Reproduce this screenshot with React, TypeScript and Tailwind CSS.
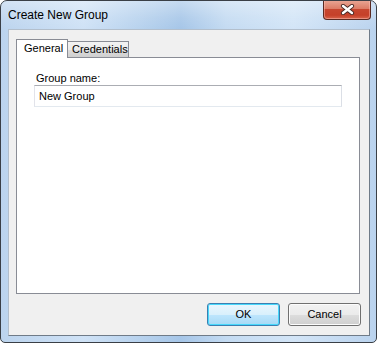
import React from "react";

export default function App() {
  const dlgFont = { fontFamily: '"Liberation Sans", Arial, sans-serif' };
  return (
    <div className="w-[377px] h-[343px] bg-white" style={dlgFont}>
      <div className="w-[377px] h-[343px] flex flex-col border border-[#3a3f46] rounded-t-[7px] rounded-b-[5px] overflow-hidden bg-[linear-gradient(90deg,#bcd4ee_0%,#cfe2f6_22%,#b3cfec_40%,#a6c6e8_48%,#c4dbf2_60%,#d3e5f7_78%,#bad3ee_100%)]">
        {/* title bar */}
        <div className="h-[28px] flex items-start shrink-0 bg-[linear-gradient(180deg,rgba(255,255,255,0.35)_0%,rgba(255,255,255,0.1)_60%,rgba(255,255,255,0)_100%)]">
          <div className="pl-[7px] pt-[6px] text-[12px] leading-[16px] text-black">
            Create New Group
          </div>
          <div className="ml-auto mr-[5px] -mt-px w-[48px] h-[20px] rounded-b-[4px] border border-[#5a2a22] border-t-0 flex items-center justify-center bg-[linear-gradient(180deg,#e9a897_0%,#dc7d67_45%,#c7462f_50%,#c54029_80%,#d8654c_100%)] shadow-[inset_0_0_0_1px_rgba(255,200,190,0.45)]">
            <svg width="15" height="11" viewBox="0 0 15 11">
              <path d="M3 2 L12 9 M12 2 L3 9" stroke="#4a2a26" strokeWidth="4.2" strokeLinecap="round" fill="none" />
              <path d="M3 2 L12 9 M12 2 L3 9" stroke="#ffffff" strokeWidth="2.4" strokeLinecap="round" fill="none" />
            </svg>
          </div>
        </div>
        {/* frame body */}
        <div className="flex-1 flex pl-[7px] pr-[6px] pb-[6px]">
          <div className="flex-1 flex flex-col bg-[#f0f0f0] border border-t-[#b3bfcc] border-l-[#b3bfcc] border-r-[#6f7b88] border-b-[#6f7b88]">
            <div className="pt-[9px] pl-[7px] pr-[9px] flex flex-col">
              {/* tabs */}
              <div className="h-[18px] flex items-end">
                <div className="relative z-10 h-[19px] -mb-px w-[52px] bg-white border border-b-0 border-[#898c95] pl-[7px] text-[11px] leading-[14px] pt-[1px] text-black">
                  General
                </div>
                <div className="h-[16px] w-[61px] border border-l-0 border-b-0 border-[#898c95] bg-[linear-gradient(180deg,#f3f3f3_0%,#ebebeb_50%,#dddddd_51%,#cfcfcf_100%)] pl-[4px] text-[11px] leading-[14px] text-black">
                  Credentials
                </div>
              </div>
              {/* panel */}
              <div className="h-[237px] bg-white border border-[#898c95] flex flex-col pl-[17px] pt-[14px]">
                <div className="pl-[2px] text-[11px] leading-[13px] text-black">Group name:</div>
                <div className="w-[308px] h-[22px] border border-[#abadb3] border-l-[#e2e3ea] border-r-[#dbdfe6] border-b-[#e3e9ef] bg-white flex items-center pl-[4px] text-[11px] text-black">
                  New Group
                </div>
              </div>
            </div>
            {/* buttons */}
            <div className="flex justify-end gap-[8px] pt-[9px] pr-[8px]">
              <div className="w-[73px] h-[23px] rounded-[3px] border border-[#3c7fb1] shadow-[inset_0_0_0_1px_#48d8fb] bg-[linear-gradient(180deg,#eaf6fd_0%,#d9f0fc_50%,#bee6fd_51%,#a7d9f5_100%)] flex items-center justify-center text-[11px] text-black">
                OK
              </div>
              <div className="w-[73px] h-[23px] rounded-[3px] border border-[#707070] shadow-[inset_0_0_0_1px_#fcfcfc] bg-[linear-gradient(180deg,#f2f2f2_0%,#ebebeb_50%,#dddddd_51%,#cfcfcf_100%)] flex items-center justify-center text-[11px] text-black">
                Cancel
              </div>
            </div>
          </div>
        </div>
      </div>
    </div>
  );
}
